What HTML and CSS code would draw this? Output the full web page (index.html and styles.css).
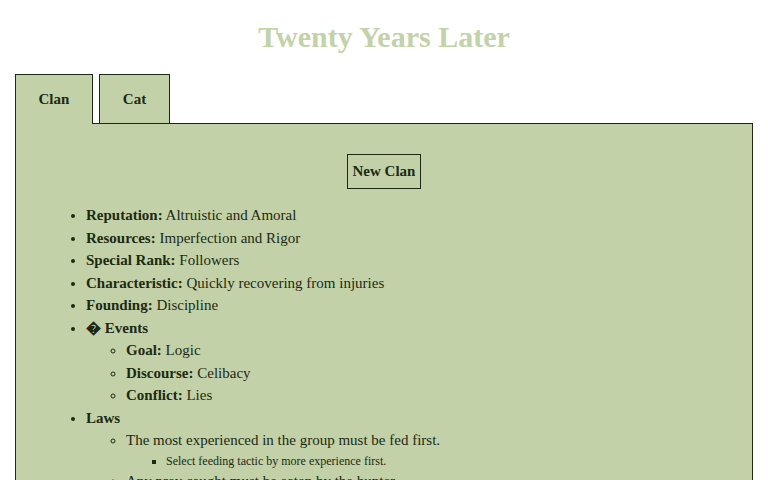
FILE: index.html
```html
<!DOCTYPE html>
<html>
<head>
<meta charset="utf-8">
<link rel="stylesheet" href="styles.css">
</head>
<body>
<h1 class="title">Twenty Years Later</h1>
<div class="tabs">
  <div class="tab active">Clan</div>
  <div class="tab">Cat</div>
</div>
<div class="panel">
  <div class="btn-row"><button class="btn">New Clan</button></div>
  <ul class="list">
    <li><b>Reputation:</b> Altruistic and Amoral</li>
    <li><b>Resources:</b> Imperfection and Rigor</li>
    <li><b>Special Rank:</b> Followers</li>
    <li><b>Characteristic:</b> Quickly recovering from injuries</li>
    <li><b>Founding:</b> Discipline</li>
    <li><b>&#xFFFD; Events</b>
      <ul>
        <li><b>Goal:</b> Logic</li>
        <li><b>Discourse:</b> Celibacy</li>
        <li><b>Conflict:</b> Lies</li>
      </ul>
    </li>
    <li><b>Laws</b>
      <ul>
        <li>The most experienced in the group must be fed first.
          <ul class="small">
            <li>Select feeding tactic by more experience first.</li>
          </ul>
        </li>
        <li>Any prey caught must be eaten by the hunter.</li>
      </ul>
    </li>
  </ul>
</div>
</body>
</html>
```
FILE: styles.css
```css
html, body {
  margin: 0;
  padding: 0;
  background: #ffffff;
}
body {
  padding: 0 15px;
  font-family: "Liberation Serif", "Times New Roman", serif;
  font-size: 15px;
  line-height: 1.5;
  color: #1c2a12;
}
.title {
  margin: 19px 0 20px;
  text-align: center;
  font-size: 30px;
  line-height: 35px;
  font-weight: bold;
  color: #c3d2a9;
}
.tabs {
  display: flex;
  gap: 6.5px;
  align-items: flex-start;
}
.tab {
  background: #c3d1a9;
  border: 1px solid #1c2a12;
  padding: 13px 22.5px 13px;
  font-weight: bold;
  line-height: 22px;
  height: 22px;
}
.tab.active {
  border-bottom: none;
  height: 23px;
  position: relative;
  z-index: 1;
}
.panel {
  background: #c3d1a9;
  border: 1px solid #1c2a12;
  margin-top: -1px;
  padding: 30px 30px 40px;
  min-height: 400px;
}
.btn-row {
  display: flex;
  justify-content: center;
}
.btn {
  font-family: "Liberation Serif", "Times New Roman", serif;
  font-size: 15px;
  font-weight: bold;
  color: #1c2a12;
  background: #c3d1a9;
  border: 1px solid #1c2a12;
  padding: 6px 5px;
  line-height: 21px;
  margin: 0;
}
.list {
  margin: 15px 0 0;
  padding-left: 40px;
}
.list ul {
  margin: 0;
  padding-left: 40px;
}
.list ul.small {
  font-size: 12px;
  line-height: 18px;
}
```
